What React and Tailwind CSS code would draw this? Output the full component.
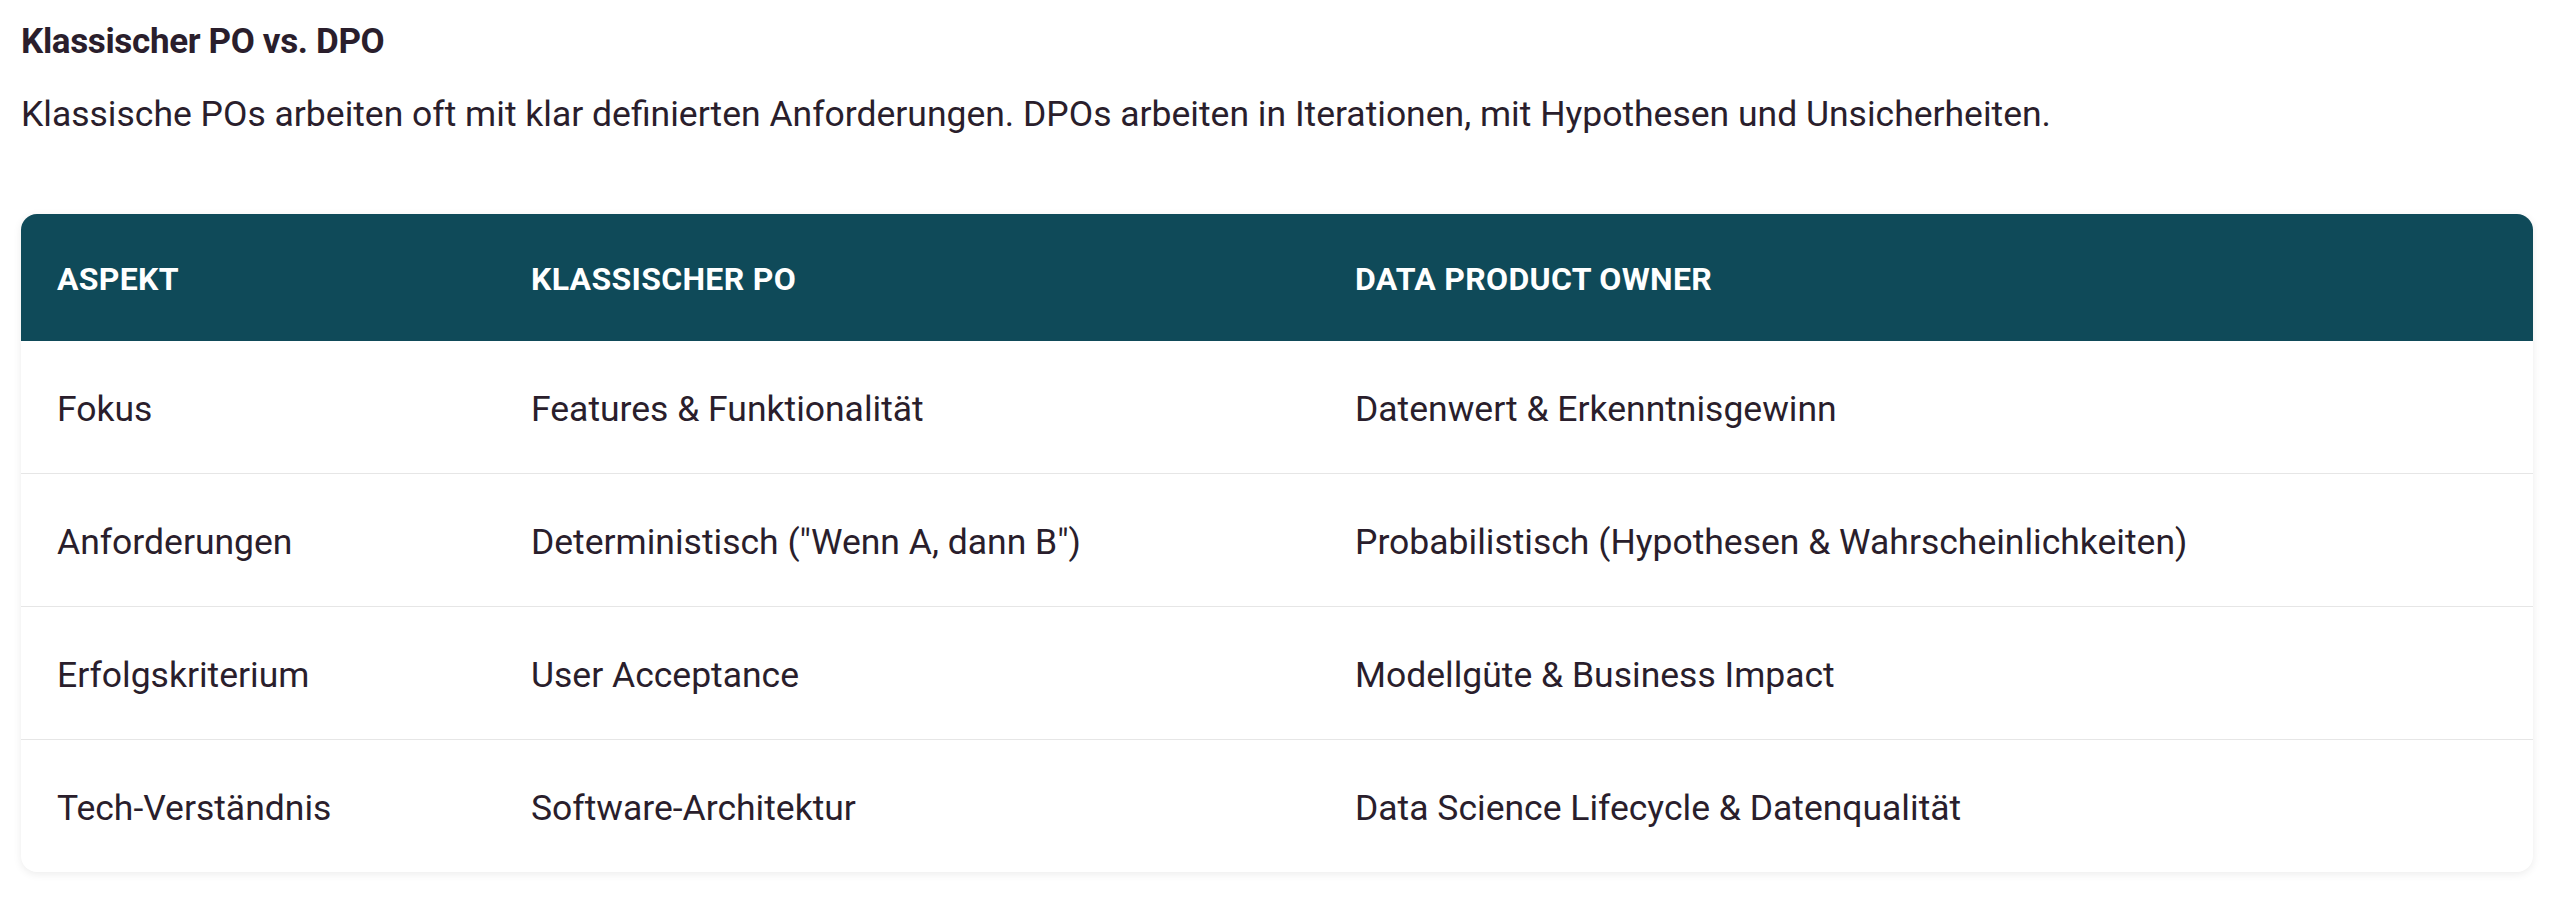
import React from "react";

const rows = [
  ["Fokus", "Features & Funktionalität", "Datenwert & Erkenntnisgewinn"],
  ["Anforderungen", 'Deterministisch ("Wenn A, dann B")', "Probabilistisch (Hypothesen & Wahrscheinlichkeiten)"],
  ["Erfolgskriterium", "User Acceptance", "Modellgüte & Business Impact"],
  ["Tech-Verständnis", "Software-Architektur", "Data Science Lifecycle & Datenqualität"],
];

export default function App() {
  return (
    <div className="min-h-[916px] w-[2560px] bg-white pl-[21px] pt-[20px] font-['Roboto',sans-serif] text-[#2a1e2c]">
      <h2 className="text-[35px] font-bold leading-[44px] tracking-[-0.01em]">Klassischer PO vs. DPO</h2>
      <p className="mt-[24px] text-[35.5px] leading-[52px]">
        Klassische POs arbeiten oft mit klar definierten Anforderungen. DPOs arbeiten in Iterationen, mit Hypothesen und Unsicherheiten.
      </p>
      <div className="mt-[74px] w-[2512px] overflow-hidden rounded-[16px] bg-white shadow-[0_2px_8px_rgba(0,0,0,0.08)]">
        <div className="grid grid-cols-[474px_824px_1fr] bg-[#0f4a59] text-[32px] font-bold uppercase leading-[47px] tracking-[0.01em] text-white">
          <div className="pb-[38px] pl-[36px] pt-[42px]">Aspekt</div>
          <div className="pb-[38px] pl-[36px] pt-[42px]">Klassischer PO</div>
          <div className="pb-[38px] pl-[36px] pt-[42px]">Data Product Owner</div>
        </div>
        {rows.map((r, i) => (
          <div
            key={i}
            className={`grid grid-cols-[474px_824px_1fr] text-[35.5px] leading-[52px] ${i > 0 ? "border-t border-[#e6e6e6]" : ""}`}
          >
            {r.map((c, j) => (
              <div key={j} className="pb-[38px] pl-[36px] pt-[42px]">
                {c}
              </div>
            ))}
          </div>
        ))}
      </div>
    </div>
  );
}
